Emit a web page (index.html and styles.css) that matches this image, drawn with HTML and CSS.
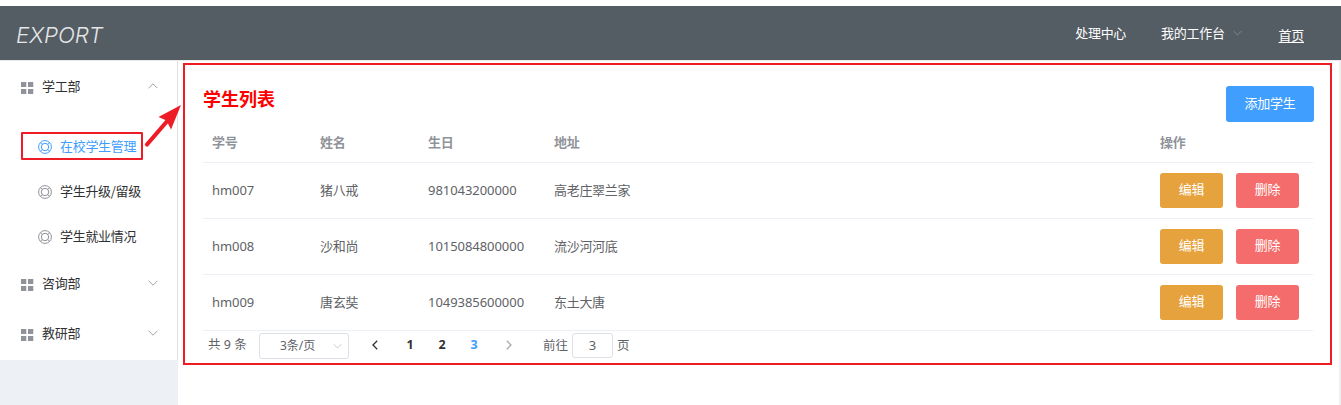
FILE: index.html
```html
<!DOCTYPE html>
<html lang="zh-CN">
<head>
<meta charset="utf-8">
<title>学生列表</title>
<link rel="stylesheet" href="styles.css">
</head>
<body>
<svg class="defs" width="0" height="0">
  <symbol id="grid" viewBox="0 0 13 12"><path d="M0 0h5.3v5H0zM7 0h5.3v5H7zM0 7h5.3v5H0zM7 7h5.3v5H7z" fill="currentColor"/></symbol>
  <symbol id="ring" viewBox="0 0 14 14"><g fill="none" stroke="currentColor" stroke-width="1"><circle cx="7" cy="7" r="6.4"/><circle cx="7" cy="7" r="3.7"/><path d="M2.4 2.6l2 2M11.6 2.6l-2 2M2.4 11.4l2-2M11.6 11.4l-2-2"/></g></symbol>
  <symbol id="down" viewBox="0 0 10 6"><path d="M.6.8L5 5.2 9.4.8" fill="none" stroke="currentColor"/></symbol>
  <symbol id="up" viewBox="0 0 10 6"><path d="M.6 5.2L5 .8l4.4 4.4" fill="none" stroke="currentColor"/></symbol>
</svg>
<header class="header">
  <svg class="logo" width="110" height="40"><text x="0" y="27" textLength="87" lengthAdjust="spacingAndGlyphs">EXPORT</text></svg>
  <nav class="nav">
    <a class="nav-item">处理中心</a>
    <a class="nav-item">我的工作台<svg class="nav-arrow"><use href="#down"/></svg></a>
    <a class="nav-item home">首页</a>
  </nav>
</header>
<div class="body">
  <aside class="sidebar">
    <div class="menu">
      <div class="group first"><svg class="grid"><use href="#grid"/></svg><span>学工部</span><svg class="chev"><use href="#up"/></svg></div>
      <div class="sub">
        <div class="item active"><svg class="ring"><use href="#ring"/></svg><span>在校学生管理</span></div>
        <div class="item"><svg class="ring"><use href="#ring"/></svg><span>学生升级/留级</span></div>
        <div class="item"><svg class="ring"><use href="#ring"/></svg><span>学生就业情况</span></div>
      </div>
      <div class="group"><svg class="grid"><use href="#grid"/></svg><span>咨询部</span><svg class="chev"><use href="#down"/></svg></div>
      <div class="group"><svg class="grid"><use href="#grid"/></svg><span>教研部</span><svg class="chev"><use href="#down"/></svg></div>
    </div>
  </aside>
  <main class="main">
    <section class="panel">
      <div class="title-row"><h1 class="title">学生列表</h1><button class="btn add">添加学生</button></div>
      <div class="row head"><span>学号</span><span>姓名</span><span>生日</span><span>地址</span><span>操作</span></div>
      <div class="row"><span class="num">hm007</span><span>猪八戒</span><span class="num">981043200000</span><span>高老庄翠兰家</span><div class="ops"><button class="btn edit">编辑</button><button class="btn del">删除</button></div></div>
      <div class="row"><span class="num">hm008</span><span>沙和尚</span><span class="num">1015084800000</span><span>流沙河河底</span><div class="ops"><button class="btn edit">编辑</button><button class="btn del">删除</button></div></div>
      <div class="row"><span class="num">hm009</span><span>唐玄奘</span><span class="num">1049385600000</span><span>东土大唐</span><div class="ops"><button class="btn edit">编辑</button><button class="btn del">删除</button></div></div>
      <div class="pager">
        <span class="total">共 9 条</span>
        <div class="select"><span>3条/页</span><svg class="sel-arrow"><use href="#down"/></svg></div>
        <svg class="prev" viewBox="0 0 6 10"><path d="M5.2.8L1 5l4.2 4.2"/></svg>
        <b class="page">1</b><b class="page">2</b><b class="page current">3</b>
        <svg class="next" viewBox="0 0 6 10"><path d="M.8.8L5 5 .8 9.2"/></svg>
        <span class="goto">前往</span><span class="jump">3</span><span>页</span>
      </div>
    </section>
  </main>
</div>
<div class="mark"></div>
<svg class="arrow" width="44" height="52" viewBox="0 0 44 52"><path d="M7 44.500L29 19" stroke="#ee1c25" stroke-width="4.200" stroke-linecap="round"/><path d="M41 5L18.500 17L26.500 20.500L31 29.500Z" fill="#ee1c25"/></svg>
</body>
</html>
```
FILE: styles.css
```css
* { box-sizing: border-box; }
body {
  margin: 0;
  padding-top: 6px;
  height: 405px;
  overflow: hidden;
  background: #fff;
  color: #606266;
  font: 13px/20px "Noto Sans CJK SC", sans-serif;
  letter-spacing: -0.3px;
}
svg { display: block; flex: none; }
.defs { position: absolute; }
.header {
  height: 54px;
  padding: 0 37px 0 16px;
  display: flex;
  align-items: center;
  justify-content: space-between;
  background: #545c64;
}
.logo { margin-top: 6px; }
.logo text { font: italic 300 22px Inter, sans-serif; fill: #e4e6e7; letter-spacing: 0; }
.nav { display: flex; color: #fff; }
.nav-item { display: flex; align-items: center; margin: 0 1px 0 34px; padding-bottom: 1px; }
.nav-arrow { width: 9px; height: 6px; margin-left: 8px; color: #868c92; }
.home { margin: 2px 0 -2px 36px; padding: 0; text-decoration: underline; text-underline-offset: 2px; }
.body { display: flex; height: 345px; border-top: 1px solid #e9e9ea; }
.sidebar { width: 178px; background: #edf0f5; }
.menu { height: 299px; background: #fff; border-right: 1px solid #e2e2e4; color: #303133; }
.group { height: 50px; padding: 0 19px 0 21px; display: flex; align-items: center; }
.grid { width: 13px; height: 12px; margin: 4px 8px 0 0; color: #909399; }
.chev { width: 10px; height: 6px; margin-left: auto; color: #a0a3a8; }
.sub { padding: 12px 0 0; }
.item { height: 45px; padding-left: 38px; display: flex; align-items: center; }
.ring { width: 14px; height: 14px; margin: 3px 8px 0 0; color: #909399; }
.active, .active .ring { color: #409eff; }
.main { flex: 1; padding: 2px 7px 0 5px; border-right: 2px solid #f0f0f1; }
.panel { height: 302px; border: 2px solid #ee1c25; padding: 0 16px 0 18px; }
.title-row { height: 57px; padding-top: 21px; display: flex; justify-content: space-between; }
.title { margin: 2px 0 0; font-size: 18px; line-height: 20px; font-weight: 700; color: #f00; letter-spacing: 0; }
.btn {
  width: 63px;
  height: 35px;
  padding: 0 0 2px;
  border: 0;
  border-radius: 3px;
  color: #fff;
  font: inherit;
  letter-spacing: inherit;
}
.add { width: 88px; height: 36px; background: #409eff; }
.edit { background: #e6a23c; }
.del { background: #f56c6c; }
.row {
  height: 56px;
  display: grid;
  grid-template-columns: 108px 108px 126px 606px 1fr;
  align-items: center;
  padding-left: 9px;
  margin-right: 1px;
  border-bottom: 1px solid #ebeef5;
}
.row > span { padding-bottom: 1px; }
.head { height: 41px; color: #909399; font-weight: 700; }
.num { font-family: "Noto Sans", sans-serif; letter-spacing: -0.05px; }
.ops { display: flex; gap: 13px; }
.ops .btn { padding-bottom: 3px; }
.pager { height: 28px; display: flex; align-items: center; padding-left: 5px; font-size: 12.5px; letter-spacing: 0; }
.total { width: 51px; white-space: nowrap; }
.total, .select, .page, .jump { font-family: "Noto Sans", "Noto Sans CJK SC", sans-serif; }
.select { width: 90px; height: 26px; margin-top: 1px; padding: 0 6px 0 20px; border: 1px solid #dcdfe6; border-radius: 3px; display: flex; align-items: center; justify-content: space-between; font-size: 12px; }
.sel-arrow { width: 9px; height: 6px; color: #c0c4cc; }
.prev, .next { width: 6px; height: 10px; fill: none; stroke: #303133; stroke-width: 1.3; }
.prev { margin: 0 16px 0 23px; }
.next { margin: 0 31px 0 16px; stroke: #a8abb2; }
.page { width: 32px; text-align: center; color: #303133; }
.current { color: #409eff; }
.jump { width: 41px; height: 25px; margin: 1px 4px 0 4px; border: 1px solid #dcdfe6; border-radius: 3px; text-align: center; line-height: 22px; font-size: 13px; }
.mark { position: absolute; left: 21px; top: 132px; width: 122px; height: 28px; border: 2px solid #ee1c25; border-radius: 1px; }
.arrow { position: absolute; left: 140px; top: 100px; }
```
